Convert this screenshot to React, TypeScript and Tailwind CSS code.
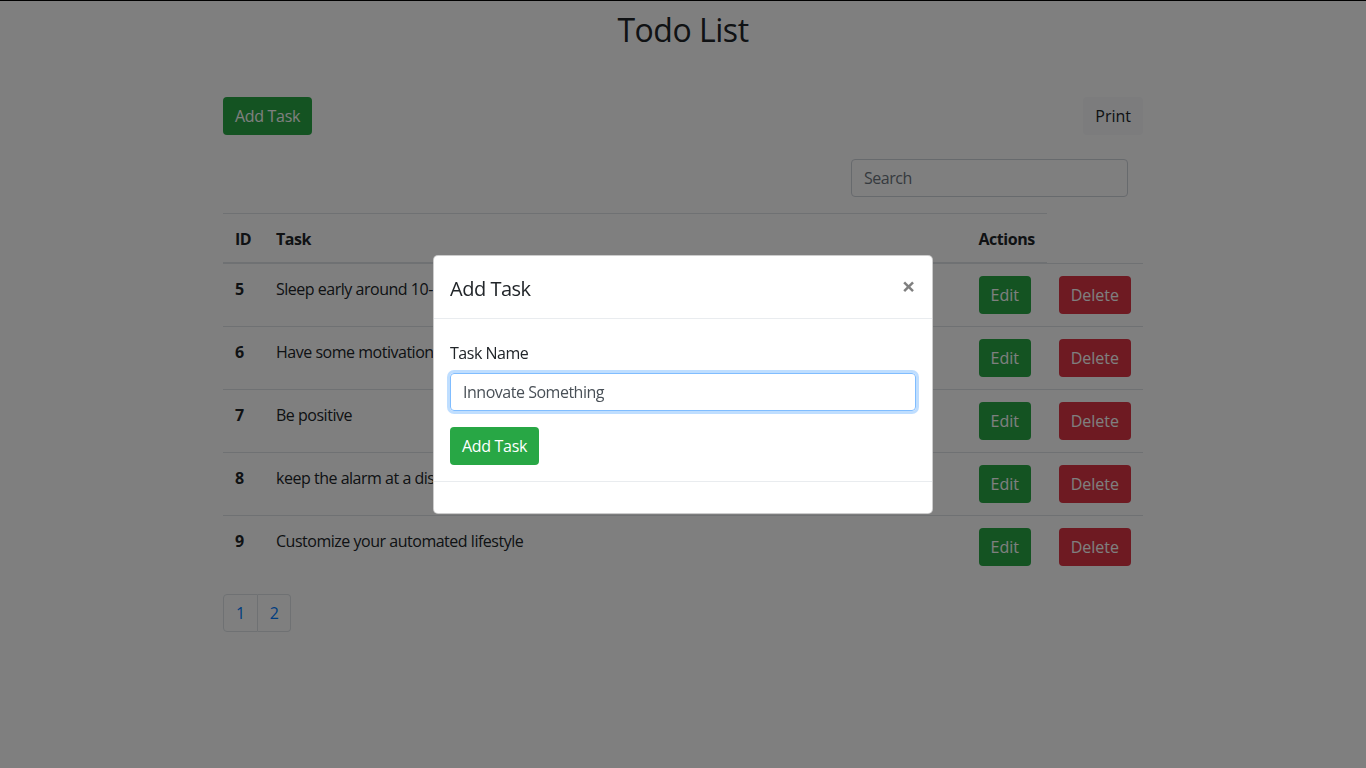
const tasks = [
  { id: 5, name: 'Sleep early around 10-11 PM' },
  { id: 6, name: 'Have some motivation' },
  { id: 7, name: 'Be positive' },
  { id: 8, name: 'keep the alarm at a distance' },
  { id: 9, name: 'Customize your automated lifestyle' },
]

function TaskRow({ id, name }: { id: number; name: string }) {
  return (
    <tr>
      <td className="border-t border-[#dee2e6] px-3 pt-[13px] pb-[11px] align-top font-bold">{id}</td>
      <td className="border-t border-[#dee2e6] px-3 pt-[13px] pb-[11px] align-top">{name}</td>
      <td className="border-t border-[#dee2e6] p-3 align-top">
        <button className="h-[38px] px-3 rounded bg-[#28a745] text-white tracking-normal">Edit</button>
      </td>
      <td className="border-t border-[#dee2e6] p-3 align-top">
        <button className="h-[38px] px-3 rounded bg-[#dc3545] text-white tracking-normal">Delete</button>
      </td>
    </tr>
  )
}

export default function App() {
  return (
    <div className="relative min-h-screen bg-white border-t border-black text-[#212529] text-base leading-6 tracking-[-0.03em] font-['Open_Sans',sans-serif]">
      <h2 className="pt-[10px] text-center text-[32px] leading-[38px]">Todo List</h2>

      <div className="w-[920px] mx-auto mt-[48px]">
        <div className="flex justify-between">
          <button className="h-[38px] px-3 rounded bg-[#28a745] text-white tracking-[-0.02em]">Add Task</button>
          <button className="h-[38px] px-3 rounded bg-[#f8f9fa] text-[#212529] tracking-normal">Print</button>
        </div>

        <div className="flex justify-end pr-[15px] mt-6">
          <input
            placeholder="Search"
            className="w-[277px] h-[38px] px-3 border border-[#ced4da] rounded placeholder:text-[#6c757d]"
          />
        </div>

        <table className="mt-4 border-collapse text-left">
          <colgroup>
            <col className="w-[41px]" />
            <col className="w-[703px]" />
            <col className="w-[80px]" />
            <col className="w-[96px]" />
          </colgroup>
          <thead>
            <tr>
              <th className="border-t border-b-2 border-[#dee2e6] px-3 pt-[13px] pb-[11px] font-bold">ID</th>
              <th className="border-t border-b-2 border-[#dee2e6] px-3 pt-[13px] pb-[11px] font-bold">Task</th>
              <th className="border-t border-b-2 border-[#dee2e6] px-3 pt-[13px] pb-[11px] font-bold">Actions</th>
            </tr>
          </thead>
          <tbody>
            {tasks.map((t) => (
              <TaskRow key={t.id} id={t.id} name={t.name} />
            ))}
          </tbody>
        </table>

        <div className="mt-4 flex">
          <a className="px-3 py-2 leading-5 border border-[#dee2e6] rounded-l text-[#007bff]">1</a>
          <a className="px-3 py-2 leading-5 border border-l-0 border-[#dee2e6] rounded-r text-[#007bff]">2</a>
        </div>
      </div>

      {/* modal backdrop */}
      <div className="fixed inset-0 bg-black/50 flex items-start justify-center pt-[255px]">
        <div className="w-[500px] bg-white border border-black/20 rounded-[5px]">
          <div className="flex items-start justify-between px-4 pt-[18px] pb-[14px] border-b border-[#e9ecef]">
            <h5 className="text-xl leading-[30px]">Add Task</h5>
            <span className="text-2xl leading-6 font-bold text-black/50 mr-[1px]">×</span>
          </div>
          <div className="px-4 pt-[22px] pb-4">
            <label className="block mb-2">Task Name</label>
            <input
              defaultValue="Innovate Something"
              className="w-full h-[38px] px-3 border border-[#80bdff] rounded text-[#495057] tracking-[-0.03em] shadow-[0_0_0_3px_rgba(0,123,255,0.25)] outline-none"
            />
            <button className="mt-4 h-[38px] px-3 rounded bg-[#28a745] text-white tracking-[-0.02em]">Add Task</button>
          </div>
          <div className="h-[32px] border-t border-[#e9ecef]" />
        </div>
      </div>
    </div>
  )
}
